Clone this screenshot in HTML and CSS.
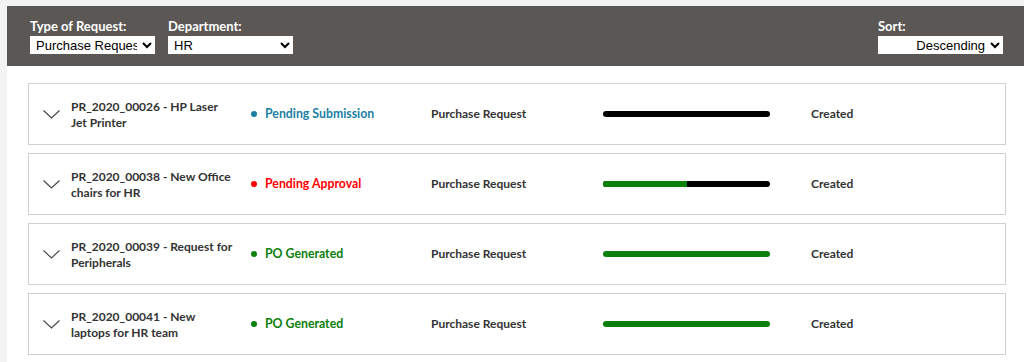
FILE: index.html
```html
<!DOCTYPE html>
<html>
<head>
    <meta charset="UTF-8">
    <title>Requests</title>
    <link rel="stylesheet" href="styles.css">
</head>
<body>
    <div class="app">
        <div class="filter-bar">
            <div class="filter">
                <label class="filter-label">Type of Request:</label>
                <select class="filter-select">
                    <option>Purchase Request</option>
                </select>
            </div>
            <div class="filter">
                <label class="filter-label">Department:</label>
                <select class="filter-select">
                    <option>HR</option>
                </select>
            </div>
            <div class="filter filter-sort">
                <label class="filter-label">Sort:</label>
                <select class="filter-select select-right">
                    <option>Descending</option>
                </select>
            </div>
        </div>

        <div class="request-list">
            <div class="request-item">
                <svg class="chevron" width="17" height="9" viewBox="0 0 17 9"><path d="M0.5 0.5 L8.5 8 L16.5 0.5" fill="none" stroke="#444" stroke-width="1.1"/></svg>
                <span class="request-title">PR_2020_00026 - HP Laser Jet Printer</span>
                <span class="request-status status-submission"><span class="dot"></span>Pending Submission</span>
                <span class="request-type">Purchase Request</span>
                <div class="progress"><div class="progress-fill" style="width: 0%"></div></div>
                <span class="request-stage">Created</span>
            </div>
            <div class="request-item">
                <svg class="chevron" width="17" height="9" viewBox="0 0 17 9"><path d="M0.5 0.5 L8.5 8 L16.5 0.5" fill="none" stroke="#444" stroke-width="1.1"/></svg>
                <span class="request-title">PR_2020_00038 - New Office chairs for HR</span>
                <span class="request-status status-approval"><span class="dot"></span>Pending Approval</span>
                <span class="request-type">Purchase Request</span>
                <div class="progress"><div class="progress-fill" style="width: 50%"></div></div>
                <span class="request-stage">Created</span>
            </div>
            <div class="request-item">
                <svg class="chevron" width="17" height="9" viewBox="0 0 17 9"><path d="M0.5 0.5 L8.5 8 L16.5 0.5" fill="none" stroke="#444" stroke-width="1.1"/></svg>
                <span class="request-title">PR_2020_00039 - Request for Peripherals</span>
                <span class="request-status status-generated"><span class="dot"></span>PO Generated</span>
                <span class="request-type">Purchase Request</span>
                <div class="progress"><div class="progress-fill" style="width: 100%"></div></div>
                <span class="request-stage">Created</span>
            </div>
            <div class="request-item">
                <svg class="chevron" width="17" height="9" viewBox="0 0 17 9"><path d="M0.5 0.5 L8.5 8 L16.5 0.5" fill="none" stroke="#444" stroke-width="1.1"/></svg>
                <span class="request-title">PR_2020_00041 - New laptops for HR team</span>
                <span class="request-status status-generated"><span class="dot"></span>PO Generated</span>
                <span class="request-type">Purchase Request</span>
                <div class="progress"><div class="progress-fill" style="width: 100%"></div></div>
                <span class="request-stage">Created</span>
            </div>
        </div>
    </div>
</body>
</html>
```

FILE: styles.css
```css
body {
    margin: 0;
    background: #f3f3f3;
    font-family: Lato, "Liberation Sans", sans-serif;
    color: #333;
}
.app {
    margin: 6px 0 0 7px;
    background: #fff;
    min-height: 356px;
}
.filter-bar {
    display: flex;
    align-items: flex-start;
    gap: 13px;
    height: 60px;
    box-sizing: border-box;
    padding: 12px 21px 0 23px;
    background-color: #5b5755;
}
.filter {
    display: flex;
    flex-direction: column;
    gap: 2px;
}
.filter-sort {
    margin-left: auto;
}
.filter-label {
    font-size: 13px;
    font-weight: bold;
    color: #fff;
    line-height: 16px;
}
.filter-select {
    width: 125px;
    height: 18px;
    padding: 0 2px;
    border: none;
    border-radius: 0;
    background: #fff;
    color: #000;
    font-family: "Liberation Sans", Arial, sans-serif;
    font-size: 13px;
}
.select-right {
    text-align: right;
    text-align-last: right;
}
.request-list {
    display: flex;
    flex-direction: column;
    gap: 8px;
    padding: 17px 18px 0 21px;
}
.request-item {
    display: flex;
    align-items: center;
    height: 62px;
    box-sizing: border-box;
    padding-left: 14px;
    border: 1px solid #d0d0d0;
    background: #fff;
    font-size: 12px;
    font-weight: bold;
    line-height: 16px;
}
.chevron {
    flex: none;
    margin-right: 11px;
    margin-top: 1px;
}
.request-title {
    width: 163px;
    flex: none;
    color: #333;
    margin-top: 2px;
}
.request-status {
    width: 180px;
    flex: none;
    display: flex;
    align-items: center;
    gap: 8px;
    margin-left: 17px;
    font-size: 12.3px;
}
.dot {
    width: 6px;
    height: 6px;
    border-radius: 50%;
    background: currentColor;
}
.status-submission {
    color: #1b7fa6;
}
.status-approval {
    color: #f00;
}
.status-generated {
    color: #0b800b;
}
.request-type {
    width: 172px;
    flex: none;
}
.progress {
    width: 167px;
    height: 6px;
    flex: none;
    border-radius: 3px;
    background: #000;
    overflow: hidden;
}
.progress-fill {
    height: 100%;
    background: #0a800a;
}
.request-stage {
    margin-left: 41px;
}
```
